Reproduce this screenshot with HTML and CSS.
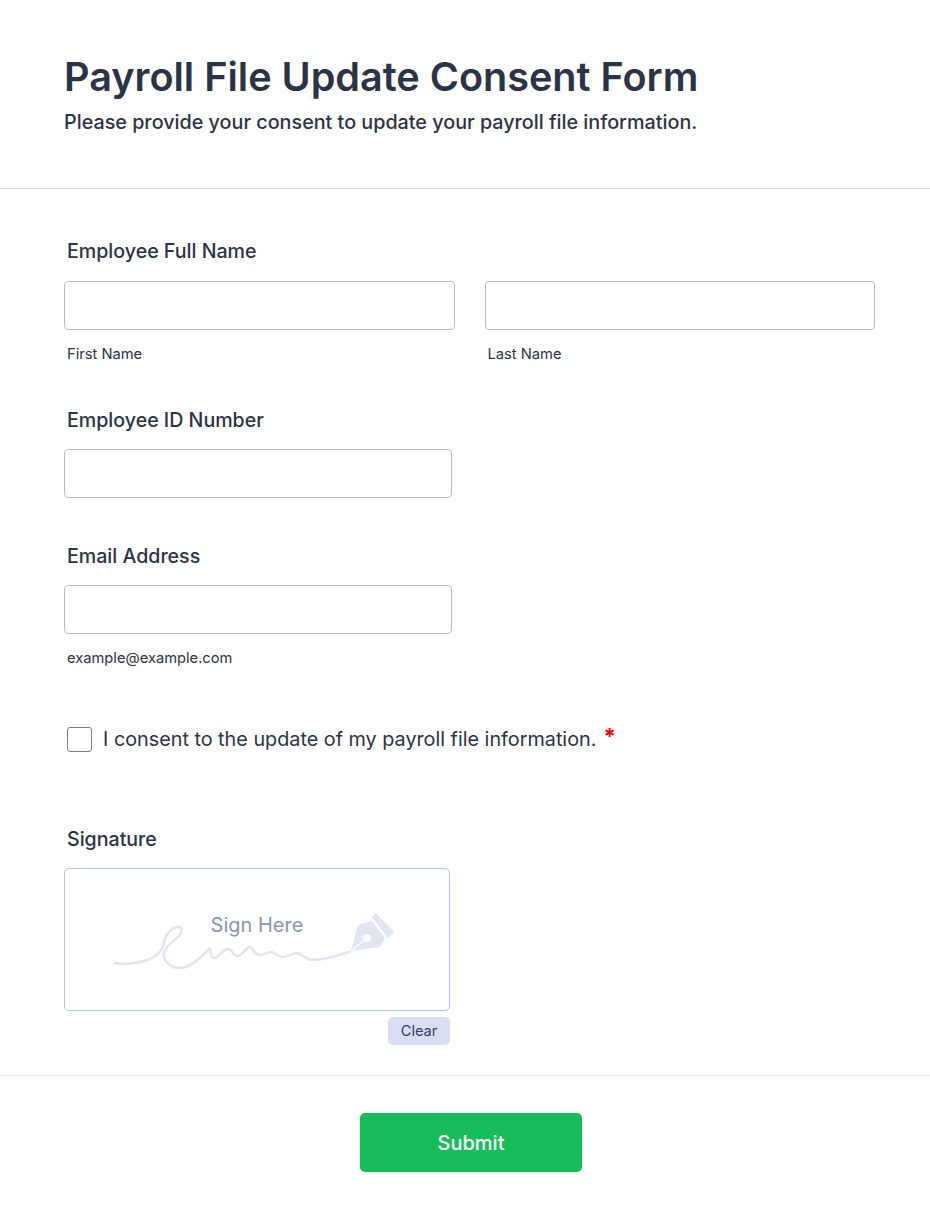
FILE: index.html
```html
<!DOCTYPE html>
<html>
  <head>
    <title>Payroll File Update Consent Form</title>
    <link rel="stylesheet" href="styles.css">
  </head>
  <body>
    <header class="form-header">
      <h1>Payroll File Update Consent Form</h1>
      <p>Please provide your consent to update your payroll file information.</p>
    </header>

    <form class="form-body">
      <div class="field field-name">
        <label class="field-label">Employee Full Name</label>
        <div class="name-row">
          <div class="name-col">
            <input type="text" class="text-input">
            <span class="sub-label">First Name</span>
          </div>
          <div class="name-col">
            <input type="text" class="text-input">
            <span class="sub-label">Last Name</span>
          </div>
        </div>
      </div>

      <div class="field field-id">
        <label class="field-label">Employee ID Number</label>
        <input type="text" class="text-input text-input-short">
      </div>

      <div class="field field-email">
        <label class="field-label">Email Address</label>
        <input type="text" class="text-input text-input-short">
        <span class="sub-label">example@example.com</span>
      </div>

      <label class="consent">
        <span class="checkbox"></span>
        <span class="consent-text">I consent to the update of my payroll file information.</span>
        <span class="required">*</span>
      </label>

      <div class="field field-signature">
        <label class="field-label">Signature</label>
        <div class="signature-pad">
          <span class="sign-here">Sign Here</span>
          <svg class="sign-art" width="300" height="70" viewBox="107 905 300 70">
            <path class="sign-line" d="M115 963C125 965 140 963 150 959C158 955 163 950 164 943C165 935 171 928 178 927C183 927 183 932 178 937C172 942 165 947 164 953C163 961 170 968 180 968C190 968 200 958 207 951C208 949 209 948 210 949C211 952 210 958 214 958C219 958 223 949 228 949C232 949 233 956 238 956C243 955 246 947 250 947C253 948 254 954 259 955C264 955 268 952 272 952C276 953 277 957 282 957C288 957 292 953 297 953C302 954 306 960 313 960C325 960 338 955 350 952"/>
            <path class="sign-pen" d="M351 951L358 925L372 921L385 938L380 947Z"/>
            <path class="sign-pen" d="M372 917L376 913L394 932L388 938Z"/>
            <path class="sign-slit" d="M352 950L367 938"/>
            <circle class="sign-hole" cx="367" cy="938" r="4"/>
          </svg>
        </div>
        <div class="clear-row">
          <button type="button" class="clear-button">Clear</button>
        </div>
      </div>

      <div class="submit-section">
        <button type="button" class="submit-button">Submit</button>
      </div>
    </form>
  </body>
</html>
```

FILE: styles.css
```css
* {
  box-sizing: border-box;
}

body {
  margin: 0;
  background-color: #fff;
  color: #2c3345;
  font-family: Inter, "Liberation Sans", sans-serif;
}

.form-header {
  height: 189px;
  padding: 53px 64px 0;
  border-bottom: 1px solid #d8dae9;
}

.form-header h1 {
  margin: 0 0 7px;
  font-size: 39.6px;
  line-height: 48px;
  font-weight: 600;
}

.form-header p {
  margin: 0;
  font-size: 19.75px;
  line-height: 28px;
  font-weight: 500;
}

.form-body {
  padding-top: 50px;
}

.field {
  padding: 0 55px 0 64px;
}

.field-label {
  display: block;
  margin: 0 0 17px 3px;
  font-size: 19.6px;
  line-height: 24px;
  font-weight: 500;
}

.field-name .field-label {
  margin-bottom: 18px;
}

.name-row {
  display: flex;
  gap: 30px;
}

.name-col {
  flex: 1;
}

.text-input {
  display: block;
  width: 100%;
  height: 49px;
  border: 1px solid #b8bdc9;
  border-radius: 4px;
  background-color: #fff;
}

.text-input-short {
  width: 388px;
}

.sub-label {
  display: block;
  margin: 15px 0 0 3px;
  font-size: 14.7px;
  line-height: 18px;
}

.field-id {
  margin-top: 45px;
}

.field-email {
  margin-top: 46px;
}

.consent {
  display: flex;
  align-items: center;
  margin: 58px 0 0 67px;
  height: 28px;
}

.checkbox {
  width: 25px;
  height: 25px;
  border: 1px solid #767c8c;
  border-radius: 3px;
}

.consent-text {
  margin-left: 11px;
  font-size: 19.8px;
  line-height: 28px;
}

.required {
  align-self: flex-start;
  margin: -3px 0 0 7px;
  color: #f00;
  font-size: 22px;
  font-weight: 700;
  line-height: 28px;
}

.field-signature {
  margin-top: 74px;
}

.signature-pad {
  position: relative;
  display: flex;
  align-items: center;
  justify-content: center;
  width: 386px;
  height: 143px;
  border: 1px solid #b1c4e2;
  border-radius: 5px;
}

.sign-here {
  position: absolute;
  top: 42px;
  left: 0;
  right: 0;
  text-align: center;
  color: #8c96ac;
  font-size: 20px;
  line-height: 28px;
}

.sign-line {
  fill: none;
  stroke: #e1e5ef;
  stroke-width: 2.5;
  stroke-linecap: round;
}

.sign-pen {
  fill: #e1e5ef;
}

.sign-slit {
  fill: none;
  stroke: #fff;
  stroke-width: 1.5;
}

.sign-hole {
  fill: #fff;
}

.clear-row {
  display: flex;
  justify-content: flex-end;
  width: 386px;
  margin-top: 6px;
}

.clear-button {
  width: 62px;
  height: 28px;
  padding: 0;
  border: none;
  border-radius: 5px;
  background-color: #dadef3;
  color: #343c6a;
  font-family: inherit;
  font-size: 14.6px;
}

.submit-section {
  display: flex;
  justify-content: center;
  margin-top: 30px;
  padding: 37px 0 50px 12px;
  border-top: 1px solid #eaebf2;
}

.submit-button {
  width: 222px;
  height: 59px;
  border: none;
  border-radius: 5px;
  background-color: #18bd5b;
  color: #fff;
  font-family: inherit;
  font-size: 20px;
  font-weight: 500;
}
```
